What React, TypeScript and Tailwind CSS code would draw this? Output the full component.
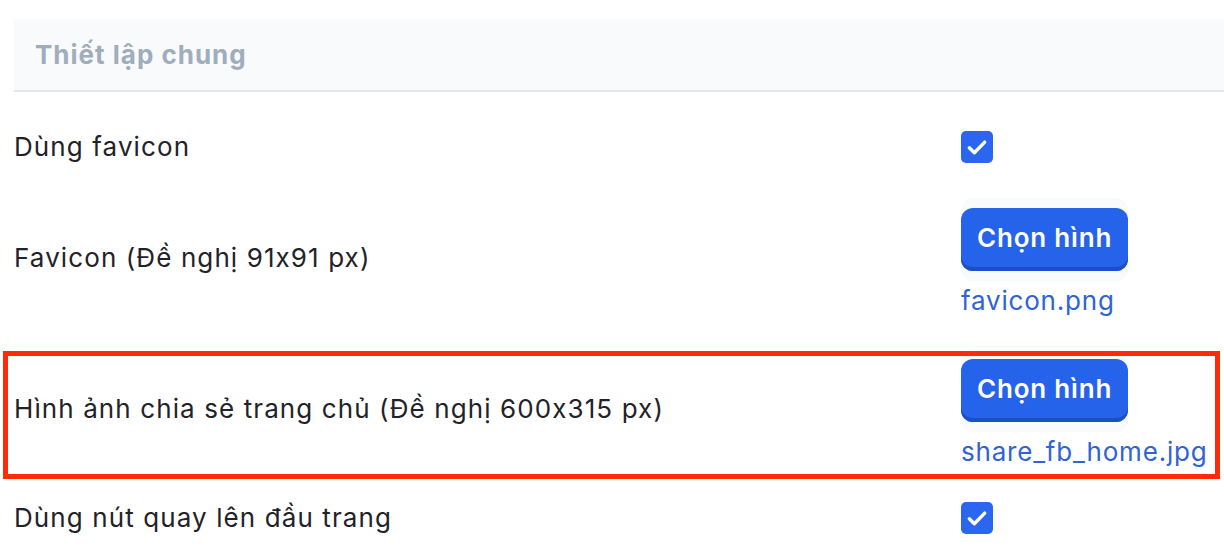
function Checkbox() {
  return (
    <span className="flex h-8 w-8 items-center justify-center rounded-[5px] bg-[#2b66f0]">
      <svg viewBox="0 0 20 20" className="h-7 w-7" fill="none">
        <path
          d="M4.5 10.5l3.6 3.6L15.5 6.5"
          stroke="white"
          strokeWidth="2.4"
          strokeLinecap="round"
          strokeLinejoin="round"
        />
      </svg>
    </span>
  );
}

function ImagePicker({ file }: { file: string }) {
  return (
    <div className="flex flex-col items-start">
      <div className="rounded-xl bg-[#f9fafb] py-[10px]">
        <button className="h-[63px] rounded-xl bg-[#2563eb] px-4 pb-1 text-[26px] font-semibold tracking-[0.8px] text-white shadow-[inset_0_-4px_0_#1d4fc4]">
          Chọn hình
        </button>
      </div>
      <span className="relative top-[2px] text-[26px] leading-[36px] tracking-[0.8px] text-[#2f63d6]">
        {file}
      </span>
    </div>
  );
}

function Row({
  label,
  children,
  highlight,
}: {
  label: string;
  children: React.ReactNode;
  highlight?: boolean;
}) {
  return (
    <div className="relative flex items-center py-4">
      <div className="flex-1 text-[26px] tracking-[1.1px] text-[#1f2329]">{label}</div>
      <div className="w-[263px]">{children}</div>
      {highlight && (
        <div className="pointer-events-none absolute -left-[11px] right-[4px] top-[18px] bottom-[5px] border-[5px] border-[#ff2a0a]" />
      )}
    </div>
  );
}

export default function App() {
  return (
    <div
      className="min-h-[548px] bg-white pl-[14px] pt-[19px] [font-feature-settings:'calt'_0]"
      style={{ fontFamily: "Inter, 'Noto Sans', sans-serif" }}
    >
      <div className="flex h-[73px] items-center border-b-2 border-[#e2e8ee] bg-[#f9fafb] pl-[21px]">
        <h2 className="text-[26px] font-bold tracking-[1px] text-[#9fadbc]">Thiết lập chung</h2>
      </div>
      <div className="pt-[19px]">
        <Row label="Dùng favicon">
          <Checkbox />
        </Row>
        <Row label="Favicon (Đề nghị 91x91 px)">
          <ImagePicker file="favicon.png" />
        </Row>
        <Row label="Hình ảnh chia sẻ trang chủ (Đề nghị 600x315 px)" highlight>
          <ImagePicker file="share_fb_home.jpg" />
        </Row>
        <div className="-mt-0.5">
          <Row label="Dùng nút quay lên đầu trang">
            <Checkbox />
          </Row>
        </div>
      </div>
    </div>
  );
}
